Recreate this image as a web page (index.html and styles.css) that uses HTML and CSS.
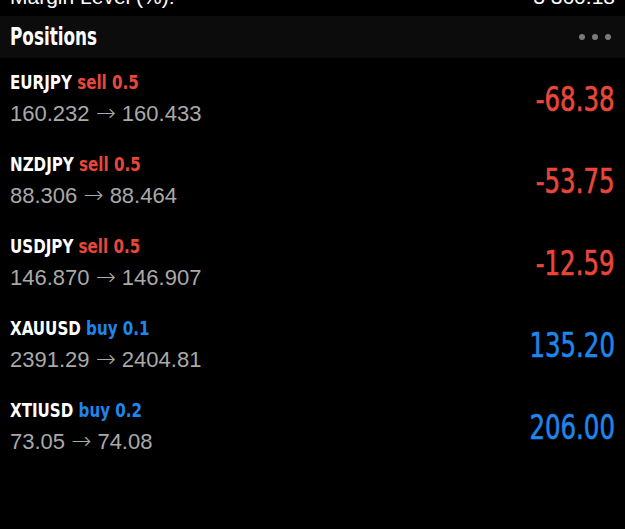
FILE: index.html
```html
<!DOCTYPE html>
<html lang="en">
<head>
    <meta charset="UTF-8">
    <meta name="viewport" content="width=device-width, initial-scale=1.0">
    <title>Positions</title>
    <link rel="stylesheet" href="styles.css">
</head>
<body>
    <div class="summary">
        <span>Margin Level (%):</span>
        <span>3 360.18</span>
    </div>

    <div class="section-head">
        <h2>Positions</h2>
        <div class="more"><i></i><i></i><i></i></div>
    </div>

    <ul class="positions">
        <li class="position">
            <div class="info">
                <div class="title">EURJPY <span class="sell">sell 0.5</span></div>
                <div class="prices">160.232 <span class="arrow">&rarr;</span> 160.433</div>
            </div>
            <div class="profit loss">-68.38</div>
        </li>
        <li class="position">
            <div class="info">
                <div class="title">NZDJPY <span class="sell">sell 0.5</span></div>
                <div class="prices">88.306 <span class="arrow">&rarr;</span> 88.464</div>
            </div>
            <div class="profit loss">-53.75</div>
        </li>
        <li class="position">
            <div class="info">
                <div class="title">USDJPY <span class="sell">sell 0.5</span></div>
                <div class="prices">146.870 <span class="arrow">&rarr;</span> 146.907</div>
            </div>
            <div class="profit loss">-12.59</div>
        </li>
        <li class="position">
            <div class="info">
                <div class="title">XAUUSD <span class="buy">buy 0.1</span></div>
                <div class="prices">2391.29 <span class="arrow">&rarr;</span> 2404.81</div>
            </div>
            <div class="profit gain">135.20</div>
        </li>
        <li class="position">
            <div class="info">
                <div class="title">XTIUSD <span class="buy">buy 0.2</span></div>
                <div class="prices">73.05 <span class="arrow">&rarr;</span> 74.08</div>
            </div>
            <div class="profit gain">206.00</div>
        </li>
    </ul>
</body>
</html>
```

FILE: styles.css
```css
body {
    margin: 0;
    background: #000;
    color: #fff;
    font-family: "Liberation Sans", Arial, sans-serif;
}
.summary {
    height: 16px;
    overflow: hidden;
    display: flex;
    justify-content: space-between;
    align-items: flex-end;
    padding: 0 10px 9px;
    box-sizing: border-box;
    font-size: 21px;
    line-height: 21px;
}
.section-head {
    height: 42px;
    background: #0c0c0c;
    display: flex;
    align-items: center;
    justify-content: space-between;
    padding: 0 10px;
}
.section-head h2 {
    margin: 0;
    font-family: "DejaVu Sans Condensed", sans-serif;
    font-weight: bold;
    font-size: 24px;
    line-height: 1;
    transform: scaleX(0.78);
    transform-origin: left center;
}
.more {
    display: flex;
    gap: 7px;
    padding-right: 4px;
}
.more i {
    width: 6px;
    height: 6px;
    border-radius: 50%;
    background: #7a7a7a;
}
.positions {
    list-style: none;
    margin: 0;
    padding: 0;
}
.position {
    height: 82px;
    display: flex;
    align-items: center;
    justify-content: space-between;
    padding: 0 10px;
}
.title {
    font-family: "DejaVu Sans Condensed", sans-serif;
    font-weight: bold;
    font-size: 20px;
    line-height: 24px;
    transform: scaleX(0.84);
    transform-origin: left center;
}
.prices {
    margin-top: 4px;
    color: #a9a9a9;
    font-size: 22px;
    line-height: 30px;
}
.arrow {
    font-family: "DejaVu Sans", sans-serif;
    font-weight: 200;
    font-size: 24px;
}
.sell,
.loss {
    color: #e9473b;
}
.buy,
.gain {
    color: #1e86ec;
}
.profit {
    font-family: "DejaVu Sans Condensed", sans-serif;
    font-size: 34px;
    line-height: 1;
    -webkit-text-stroke: 0.6px currentColor;
    transform: scaleX(0.8);
    transform-origin: right center;
}
```
